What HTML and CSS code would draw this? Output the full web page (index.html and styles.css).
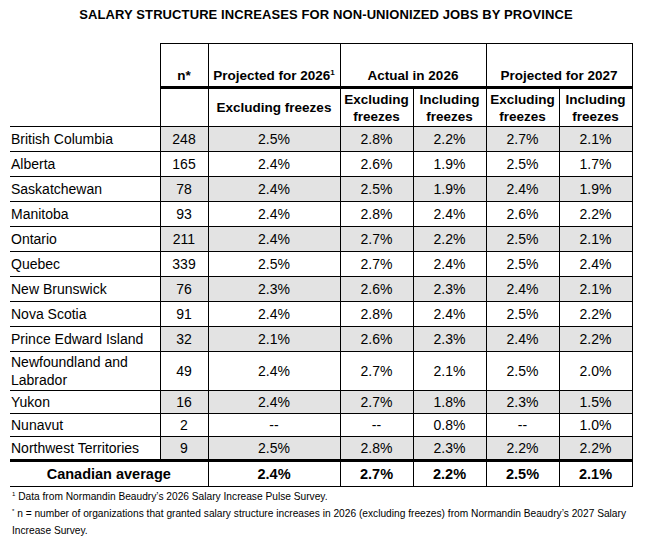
FILE: index.html
```html
<!DOCTYPE html>
<html lang="en">
<head>
  <meta charset="UTF-8">
  <meta name="viewport" content="width=device-width, initial-scale=1.0">
  <title>Salary Structure Increases</title>
  <link rel="stylesheet" href="styles.css">
</head>
<body>
<h2 class="title">SALARY STRUCTURE INCREASES FOR NON-UNIONIZED JOBS BY PROVINCE</h2>
<table class="salary-table">
  <colgroup>
    <col class="c-prov">
    <col class="c-n">
    <col class="c-proj">
    <col class="c-val"><col class="c-val"><col class="c-val"><col class="c-val">
  </colgroup>
  <thead>
    <tr class="head-1">
      <th class="blank"></th>
      <th>n*</th>
      <th>Projected for 2026<sup>1</sup></th>
      <th colspan="2">Actual in 2026</th>
      <th colspan="2">Projected for 2027</th>
    </tr>
    <tr class="head-2">
      <th class="blank"></th>
      <th></th>
      <th>Excluding freezes</th>
      <th>Excluding freezes</th>
      <th>Including freezes</th>
      <th>Excluding freezes</th>
      <th>Including freezes</th>
    </tr>
  </thead>
  <tbody>
    <tr class="shade"><td>British Columbia</td><td>248</td><td>2.5%</td><td>2.8%</td><td>2.2%</td><td>2.7%</td><td>2.1%</td></tr>
    <tr><td>Alberta</td><td>165</td><td>2.4%</td><td>2.6%</td><td>1.9%</td><td>2.5%</td><td>1.7%</td></tr>
    <tr class="shade"><td>Saskatchewan</td><td>78</td><td>2.4%</td><td>2.5%</td><td>1.9%</td><td>2.4%</td><td>1.9%</td></tr>
    <tr><td>Manitoba</td><td>93</td><td>2.4%</td><td>2.8%</td><td>2.4%</td><td>2.6%</td><td>2.2%</td></tr>
    <tr class="shade"><td>Ontario</td><td>211</td><td>2.4%</td><td>2.7%</td><td>2.2%</td><td>2.5%</td><td>2.1%</td></tr>
    <tr><td>Quebec</td><td>339</td><td>2.5%</td><td>2.7%</td><td>2.4%</td><td>2.5%</td><td>2.4%</td></tr>
    <tr class="shade"><td>New Brunswick</td><td>76</td><td>2.3%</td><td>2.6%</td><td>2.3%</td><td>2.4%</td><td>2.1%</td></tr>
    <tr><td>Nova Scotia</td><td>91</td><td>2.4%</td><td>2.8%</td><td>2.4%</td><td>2.5%</td><td>2.2%</td></tr>
    <tr class="shade"><td>Prince Edward Island</td><td>32</td><td>2.1%</td><td>2.6%</td><td>2.3%</td><td>2.4%</td><td>2.2%</td></tr>
    <tr class="tall"><td>Newfoundland and Labrador</td><td>49</td><td>2.4%</td><td>2.7%</td><td>2.1%</td><td>2.5%</td><td>2.0%</td></tr>
    <tr class="shade short"><td>Yukon</td><td>16</td><td>2.4%</td><td>2.7%</td><td>1.8%</td><td>2.3%</td><td>1.5%</td></tr>
    <tr class="short"><td>Nunavut</td><td>2</td><td>--</td><td>--</td><td>0.8%</td><td>--</td><td>1.0%</td></tr>
    <tr class="shade short last"><td>Northwest Territories</td><td>9</td><td>2.5%</td><td>2.8%</td><td>2.3%</td><td>2.2%</td><td>2.2%</td></tr>
  </tbody>
  <tfoot>
    <tr class="avg">
      <td colspan="2">Canadian average</td>
      <td>2.4%</td><td>2.7%</td><td>2.2%</td><td>2.5%</td><td>2.1%</td>
    </tr>
  </tfoot>
</table>
<div class="notes">
  <p><span class="mark">1</span> Data from Normandin Beaudry’s 2026 Salary Increase Pulse Survey.</p>
  <p><span class="mark">*</span> n = number of organizations that granted salary structure increases in 2026 (excluding freezes) from Normandin Beaudry’s 2027 Salary Increase Survey.</p>
</div>
</body>
</html>
```

FILE: styles.css
```css
body { margin: 0; padding: 8px 14px 0 10px; font-family: "Liberation Sans", Arial, sans-serif; color: #000; background: #fff; }
.title { margin: 0 0 21px 0; text-align: center; font-size: 13px; font-weight: bold; line-height: 14px; letter-spacing: 0.1px; }

.salary-table { border-collapse: collapse; width: 622px; table-layout: fixed; font-size: 14px; }
.c-prov { width: 150px; }
.c-n { width: 48px; }
.c-proj { width: 132px; }
.c-val { width: 73px; }

.salary-table th, .salary-table td { border: 1px solid #000; padding: 0 2px; text-align: center; }
.salary-table th { font-weight: bold; font-size: 13.5px; line-height: 17px; }
.salary-table th.blank { border: none; }
.head-1 th { height: 40px; vertical-align: bottom; padding-bottom: 2px; border-bottom: 3px solid #000; }
.head-2 th { height: 37px; }
.salary-table sup { font-size: 8px; vertical-align: 5px; line-height: 0; }

.salary-table td { height: 24px; line-height: 16px; }
.salary-table tbody td:first-child { border-left: none; text-align: left; padding-left: 1px; background: #fff; }
.salary-table tr.shade td { background: #e3e3e3; }
.salary-table tr.shade td:first-child { background: #fff; }
.salary-table tr.tall td { height: 38px; line-height: 18px; }
.salary-table tr.short td { height: 22px; }
.salary-table tr.last td { border-bottom: 3px solid #000; }

.avg td { height: 24px; font-weight: bold; font-size: 14.5px; }
.avg td:first-child { border-left: none; }

.notes { margin-top: 1px; font-size: 10.2px; line-height: 17px; }
.notes p { margin: 0; padding-left: 2px; }
.notes .mark { font-size: 6px; vertical-align: top; line-height: 12px; }
```
